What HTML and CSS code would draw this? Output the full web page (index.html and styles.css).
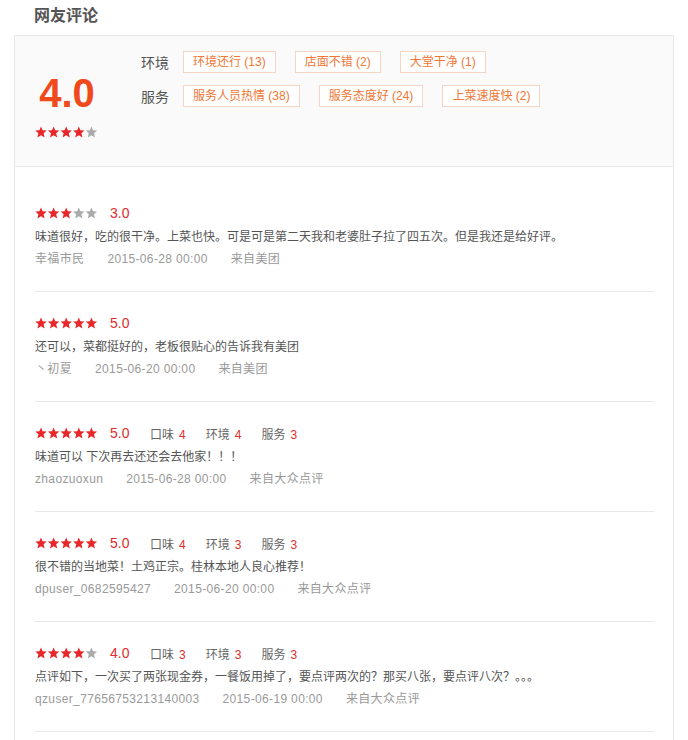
FILE: index.html
```html
<!DOCTYPE html>
<html lang="zh-CN">
<head>
    <meta charset="UTF-8">
    <title>网友评论</title>
    <link rel="stylesheet" href="styles.css">
</head>
<body>
    <div class="comments">
        <h2 class="comments-title">网友评论</h2>

        <div class="comments-box">
            <!-- summary: overall score and tags -->
            <div class="summary">
                <div class="score">
                    <div class="score-num">4.0</div>
                    <svg class="stars" width="64" height="12" viewBox="0 0 64 12">
                        <g fill="#e8272a">
                            <polygon points="6,0.5 7.6,4.3 11.7,4.6 8.6,7.3 9.6,11.4 6,9.2 2.4,11.4 3.4,7.3 0.3,4.6 4.4,4.3"/>
                            <polygon transform="translate(12.6 0)" points="6,0.5 7.6,4.3 11.7,4.6 8.6,7.3 9.6,11.4 6,9.2 2.4,11.4 3.4,7.3 0.3,4.6 4.4,4.3"/>
                            <polygon transform="translate(25.2 0)" points="6,0.5 7.6,4.3 11.7,4.6 8.6,7.3 9.6,11.4 6,9.2 2.4,11.4 3.4,7.3 0.3,4.6 4.4,4.3"/>
                            <polygon transform="translate(37.8 0)" points="6,0.5 7.6,4.3 11.7,4.6 8.6,7.3 9.6,11.4 6,9.2 2.4,11.4 3.4,7.3 0.3,4.6 4.4,4.3"/>
                        </g>
                        <polygon fill="#aaa" transform="translate(50.4 0)" points="6,0.5 7.6,4.3 11.7,4.6 8.6,7.3 9.6,11.4 6,9.2 2.4,11.4 3.4,7.3 0.3,4.6 4.4,4.3"/>
                    </svg>
                </div>
                <div class="tags">
                    <div class="tag-row">
                        <span class="tag-label">环境</span>
                        <span class="tag">环境还行 (13)</span>
                        <span class="tag">店面不错 (2)</span>
                        <span class="tag">大堂干净 (1)</span>
                    </div>
                    <div class="tag-row">
                        <span class="tag-label">服务</span>
                        <span class="tag">服务人员热情 (38)</span>
                        <span class="tag">服务态度好 (24)</span>
                        <span class="tag">上菜速度快 (2)</span>
                    </div>
                </div>
            </div>

            <ul class="review-list" id="review-list"></ul>
        </div>
    </div>

    <script src="script.js"></script>
</body>
</html>
```

FILE: styles.css
```css
body {
    margin: 0;
    padding: 0 14px;
    background: #fff;
    font-family: 'Liberation Sans', 'Noto Sans CJK SC', sans-serif;
    color: #333;
}

.comments-title {
    margin: 0;
    padding: 5px 0 0 20px;
    height: 30px;
    font-size: 16px;
    line-height: 22px;
    font-weight: bold;
    color: #555;
}

.comments-box {
    width: 658px;
    border: 1px solid #e8e8e8;
    border-bottom: none;
}

.summary {
    display: flex;
    height: 130px;
    background: #fafafa;
    border-bottom: 1px solid #e8e8e8;
}

.score {
    width: 126px;
    flex-shrink: 0;
    padding: 37px 0 0 20px;
    box-sizing: border-box;
}

.score-num {
    width: 64px;
    text-align: center;
    font-size: 40px;
    line-height: 40px;
    font-weight: bold;
    color: #f0491b;
    margin-bottom: 13px;
}

.stars {
    display: block;
    flex-shrink: 0;
}

.tags {
    padding-top: 15px;
}

.tag-row {
    display: flex;
    align-items: center;
    height: 22px;
    margin-bottom: 12px;
}

.tag-label {
    flex-shrink: 0;
    font-size: 14px;
    color: #555;
    margin-right: 14px;
}

.tag {
    flex-shrink: 0;
    height: 20px;
    line-height: 20px;
    padding: 0 9px;
    margin-right: 19px;
    border: 1px solid #f6d6c2;
    background: #fff;
    font-size: 12px;
    color: #f07634;
}

.review-list {
    list-style: none;
    margin: 0;
    padding: 15px 19px 40px 20px;
}

.review {
    padding: 21px 0;
    border-bottom: 1px solid #e8e8e8;
}

.review-head {
    display: flex;
    align-items: center;
    height: 20px;
    margin-bottom: 3px;
}

.review-score {
    margin-left: 11px;
    width: 25px;
    font-size: 14px;
    color: #e22b2b;
}

.sub-scores {
    display: flex;
    margin-left: 15px;
}

.sub-score {
    font-size: 12px;
    color: #666;
    margin-right: 20px;
}

.sub-score em {
    font-style: normal;
    color: #e22b2b;
    margin-left: 5px;
}

.review-text {
    font-size: 12px;
    line-height: 22px;
    color: #555;
}

.review-meta {
    font-size: 12px;
    line-height: 22px;
    letter-spacing: 0.35px;
    color: #999;
}

.review-meta span {
    margin-right: 23px;
}
```

FILE: script.js
```js
const reviews = [
    { score: 3, user: '幸福市民', date: '2015-06-28 00:00', from: '来自美团',
      text: '味道很好，吃的很干净。上菜也快。可是可是第二天我和老婆肚子拉了四五次。但是我还是给好评。' },
    { score: 5, user: '丶初夏', date: '2015-06-20 00:00', from: '来自美团',
      text: '还可以，菜都挺好的，老板很贴心的告诉我有美团' },
    { score: 5, user: 'zhaozuoxun', date: '2015-06-28 00:00', from: '来自大众点评',
      sub: [4, 4, 3], text: '味道可以 下次再去还还会去他家！！！' },
    { score: 5, user: 'dpuser_0682595427', date: '2015-06-20 00:00', from: '来自大众点评',
      sub: [4, 3, 3], text: '很不错的当地菜！土鸡正宗。桂林本地人良心推荐！' },
    { score: 4, user: 'qzuser_77656753213140003', date: '2015-06-19 00:00', from: '来自大众点评',
      sub: [3, 3, 3], text: '点评如下，一次买了两张现金券，一餐饭用掉了，要点评两次的？那买八张，要点评八次？。。。' }
];

const star = 'points="6,0.5 7.6,4.3 11.7,4.6 8.6,7.3 9.6,11.4 6,9.2 2.4,11.4 3.4,7.3 0.3,4.6 4.4,4.3"';

function starsSvg(n) {
    let g = '';
    for (let i = 0; i < 5; i++) {
        g += `<polygon fill="${i < n ? '#e8272a' : '#aaa'}" transform="translate(${i * 12.6} 0)" ${star}/>`;
    }
    return `<svg class="stars" width="64" height="12" viewBox="0 0 64 12">${g}</svg>`;
}

const list = document.getElementById('review-list');
const labels = ['口味', '环境', '服务'];

reviews.forEach(r => {
    let sub = '';
    if (r.sub) {
        sub = '<div class="sub-scores">' + r.sub.map((v, i) =>
            `<span class="sub-score">${labels[i]}<em>${v}</em></span>`).join('') + '</div>';
    }
    const li = document.createElement('li');
    li.className = 'review';
    li.innerHTML = `
        <div class="review-head">${starsSvg(r.score)}<span class="review-score">${r.score}.0</span>${sub}</div>
        <div class="review-text">${r.text}</div>
        <div class="review-meta"><span>${r.user}</span><span>${r.date}</span><span>${r.from}</span></div>`;
    list.appendChild(li);
});
```
